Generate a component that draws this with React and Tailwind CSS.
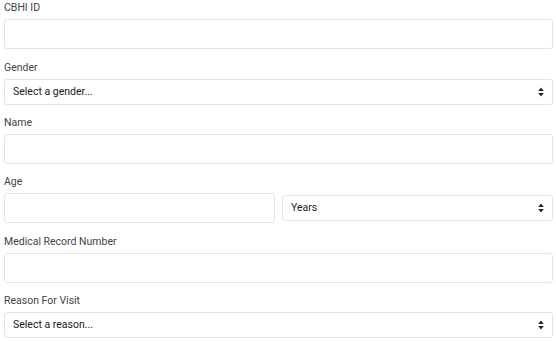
const font = { fontFamily: 'Roboto, "Liberation Sans", Arial, sans-serif' }

function Arrows() {
  return (
    <svg width="6" height="10" viewBox="0 0 6 10" className="shrink-0">
      <path d="M3 0.5 L5.8 4 L0.2 4 Z" fill="#222" />
      <path d="M3 9.5 L5.8 6 L0.2 6 Z" fill="#222" />
    </svg>
  )
}

function Label({ children }) {
  return <div className="h-[14px] mb-[4px] text-[10.5px] leading-[14px] text-[#444]">{children}</div>
}

function TextInput({ className = 'w-full' }) {
  return <input type="text" className={`block h-[30px] rounded-[3px] border border-[#e4e4e4] bg-white outline-none ${className}`} />
}

function Select({ text, className = '' }) {
  return (
    <div className={`flex items-center justify-between h-[26px] rounded-[3px] border border-[#e4e4e4] bg-white pl-[8px] pr-[8px] ${className}`}>
      <span className="text-[10.5px] text-[#1a1a1a]">{text}</span>
      <Arrows />
    </div>
  )
}

export default function App() {
  return (
    <div className="w-[556px] h-[341px] overflow-hidden bg-white pl-[4px] pr-[3px] pt-[1px]" style={font}>
      <div className="mb-[12px]">
        <Label>CBHI ID</Label>
        <TextInput />
      </div>
      <div className="mb-[11px]">
        <Label>Gender</Label>
        <Select text="Select a gender..." />
      </div>
      <div className="mb-[11px]">
        <Label>Name</Label>
        <TextInput />
      </div>
      <div className="mb-[12px]">
        <Label>Age</Label>
        <div className="flex items-center gap-[7px]">
          <TextInput className="w-[271px] shrink-0" />
          <Select text="Years" className="flex-1 min-w-0" />
        </div>
      </div>
      <div className="mb-[11px]">
        <Label>Medical Record Number</Label>
        <TextInput />
      </div>
      <div>
        <Label>Reason For Visit</Label>
        <Select text="Select a reason..." />
      </div>
    </div>
  )
}
